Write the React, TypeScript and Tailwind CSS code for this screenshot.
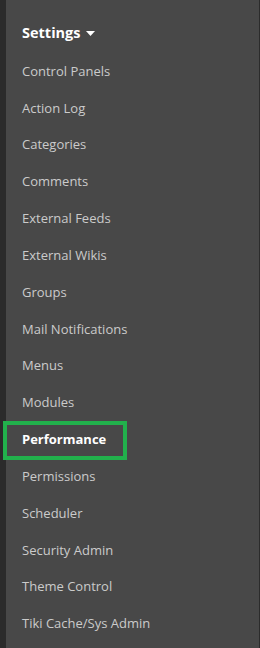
const items = [
  "Control Panels",
  "Action Log",
  "Categories",
  "Comments",
  "External Feeds",
  "External Wikis",
  "Groups",
  "Mail Notifications",
  "Menus",
  "Modules",
  "Performance",
  "Permissions",
  "Scheduler",
  "Security Admin",
  "Theme Control",
  "Tiki Cache/Sys Admin",
];

export default function App() {
  return (
    <div className="flex h-[648px] w-[260px] bg-[#2b2b2b] font-['Open_Sans',sans-serif]">
      <div className="w-[6px] shrink-0" />
      <nav className="relative flex-1 border-r border-[#2b2b2b] bg-[#484848] pt-[13px]">
        <div className="flex h-[40px] items-center gap-[5px] pl-[16px] text-[14.5px] font-bold text-white">
          Settings
          <svg width="9" height="5" viewBox="0 0 9 5" className="mt-[1px]">
            <path d="M0 0h9L4.5 5z" fill="#fff" />
          </svg>
        </div>
        <ul>
          {items.map((label) => {
            const active = label === "Performance";
            return (
              <li
                key={label}
                className={
                  "relative flex h-[36.85px] items-center pl-[16px] text-[13px] " +
                  (active ? "font-bold text-white" : "text-[#cbcbcb]")
                }
              >
                {label}
                {active && (
                  <span className="absolute left-[-3px] top-0 h-[39px] w-[124px] border-4 border-[#22b14c]" />
                )}
              </li>
            );
          })}
        </ul>
      </nav>
    </div>
  );
}
